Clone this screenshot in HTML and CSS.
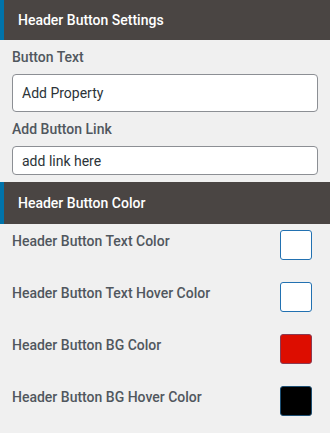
FILE: index.html
```html
<!DOCTYPE html>
<html>
<head>
<meta charset="utf-8">
<link rel="stylesheet" href="styles.css">
</head>
<body>
<div class="panel">
  <div class="section-head first">Header Button Settings</div>
  <div class="fields">
    <label class="field-label">Button Text</label>
    <input class="text-input tall" type="text" value="Add Property">
    <label class="field-label">Add Button Link</label>
    <input class="text-input short" type="text" value="add link here">
  </div>
  <div class="section-head second">Header Button Color</div>
  <div class="colors">
    <div class="color-row">
      <span class="color-label">Header Button Text Color</span>
      <span class="swatch swatch-white"></span>
    </div>
    <div class="color-row">
      <span class="color-label">Header Button Text Hover Color</span>
      <span class="swatch swatch-white"></span>
    </div>
    <div class="color-row">
      <span class="color-label">Header Button BG Color</span>
      <span class="swatch swatch-red"></span>
    </div>
    <div class="color-row">
      <span class="color-label">Header Button BG Hover Color</span>
      <span class="swatch swatch-black"></span>
    </div>
  </div>
</div>
</body>
</html>
```
FILE: styles.css
```css
html, body {
  margin: 0;
  padding: 0;
  background: #f0f0f0;
}
body {
  font-family: Roboto, "Liberation Sans", sans-serif;
  font-size: 14px;
}
.panel {
  width: 330px;
}
.section-head {
  box-sizing: border-box;
  background: #4a4543;
  border-left: 4px solid #0073aa;
  color: #ffffff;
  font-weight: 500;
  font-size: 14px;
  padding-left: 14px;
  display: flex;
  align-items: center;
}
.section-head.first {
  height: 40px;
}
.section-head.second {
  height: 42px;
  margin-top: 7px;
}
.fields {
  display: flex;
  flex-direction: column;
  padding: 0 12px;
}
.field-label {
  display: block;
  color: #50575e;
  font-weight: 500;
  font-size: 14px;
  line-height: 16px;
  margin-top: 9px;
  margin-bottom: 9px;
}
.text-input {
  box-sizing: border-box;
  width: 306px;
  border: 1px solid #8c8f94;
  border-radius: 4px;
  background: #ffffff;
  color: #2c3338;
  font-family: Roboto, "Liberation Sans", sans-serif;
  font-size: 14px;
  padding: 0 9px;
  margin: 0;
  outline: none;
}
.text-input.tall {
  height: 38px;
}
.text-input.short {
  height: 29px;
}
.colors {
  padding: 6px 18px 0 12px;
}
.color-row {
  display: flex;
  justify-content: space-between;
  align-items: flex-start;
  height: 52px;
}
.color-label {
  color: #50575e;
  font-weight: 500;
  font-size: 14px;
  line-height: 16px;
  margin-top: 3px;
}
.swatch {
  box-sizing: border-box;
  width: 32px;
  height: 30px;
  border-radius: 3px;
  border: 1px solid #2271b1;
}
.swatch-white {
  background: #ffffff;
}
.swatch-red {
  background: #dd0d00;
  border-color: #8a3a52;
}
.swatch-black {
  background: #000000;
  border-color: #1d4f73;
}
```
